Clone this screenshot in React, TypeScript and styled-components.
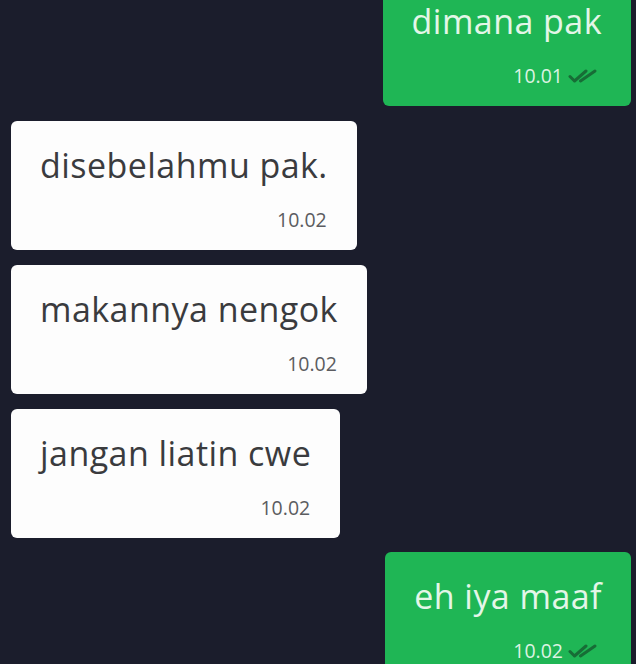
import styled, { createGlobalStyle } from 'styled-components';

const GlobalStyle = createGlobalStyle`
  html, body {
    margin: 0;
    padding: 0;
    background: #1b1d2c;
    overflow: hidden;
  }
`;

const ChatScreen = styled.div`
  width: 636px;
  height: 664px;
  overflow: hidden;
  display: flex;
  flex-direction: column;
  gap: 15px;
  background: #1b1d2c;
  font-family: 'Open Sans', 'Noto Sans', sans-serif;
`;

const Bubble = styled.div<{ $mine?: boolean }>`
  align-self: ${(p) => (p.$mine ? 'flex-end' : 'flex-start')};
  margin: ${(p) => (p.$mine ? '0 5px 0 0' : '0 0 0 11px')};
  padding: 24px 29px 18px 29px;
  border-radius: 6px;
  background: ${(p) => (p.$mine ? '#1fb655' : '#fdfdfd')};
  display: flex;
  flex-direction: column;
  gap: 23px;

  &:first-child {
    margin-top: -23px;
  }
  &:last-child {
    margin-top: -1px;
  }
`;

const MessageText = styled.div<{ $mine?: boolean }>`
  font-size: 34px;
  letter-spacing: 0.45px;
  line-height: 40px;
  color: ${(p) => (p.$mine ? '#e4f6e8' : '#3a3b3e')};
  white-space: nowrap;
`;

const Meta = styled.div<{ $mine?: boolean }>`
  display: flex;
  justify-content: flex-end;
  align-items: center;
  gap: 5px;
  height: 24px;
  padding-right: ${(p) => (p.$mine ? '4px' : '1px')};
`;

const Time = styled.span<{ $mine?: boolean }>`
  font-size: 19.5px;
  line-height: 24px;
  color: ${(p) => (p.$mine ? '#dcf3e2' : '#5b5c60')};
`;

function ReadTicks() {
  return (
    <svg width="30" height="14" viewBox="0 0 30 14" fill="none">
      <g stroke="#176d36" strokeWidth="3" strokeLinecap="round" strokeLinejoin="round">
        <path d="M2 7.5 L6.5 12 L18 2" />
        <path d="M12.5 12 L27 2" />
      </g>
    </svg>
  );
}

const messages = [
  { text: 'dimana pak', time: '10.01', mine: true },
  { text: 'disebelahmu pak.', time: '10.02', mine: false },
  { text: 'makannya nengok', time: '10.02', mine: false },
  { text: 'jangan liatin cwe', time: '10.02', mine: false },
  { text: 'eh iya maaf', time: '10.02', mine: true },
];

export default function App() {
  return (
    <>
      <GlobalStyle />
      <ChatScreen>
        {messages.map((m, i) => (
          <Bubble key={i} $mine={m.mine}>
            <MessageText $mine={m.mine}>{m.text}</MessageText>
            <Meta $mine={m.mine}>
              <Time $mine={m.mine}>{m.time}</Time>
              {m.mine && <ReadTicks />}
            </Meta>
          </Bubble>
        ))}
      </ChatScreen>
    </>
  );
}
